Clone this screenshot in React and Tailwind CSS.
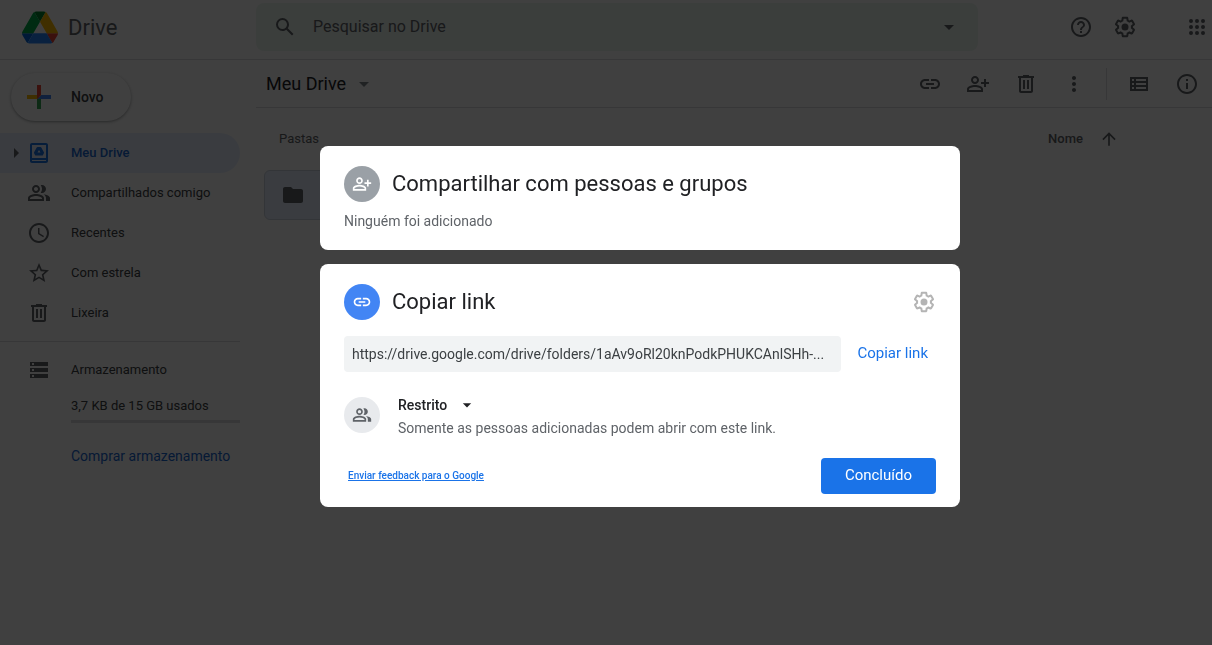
const PATHS = {
  search:
    "M20.49 19l-5.73-5.73C15.53 12.2 16 10.91 16 9.5A6.5 6.5 0 1 0 9.5 16c1.41 0 2.7-.47 3.77-1.24L19 20.49 20.49 19zM5 9.5C5 7.01 7.01 5 9.5 5S14 7.01 14 9.5 11.99 14 9.5 14 5 11.99 5 9.5z",
  caret: "M7 10l5 5 5-5z",
  caretRight: "M10 17l5-5-5-5z",
  help: "M11 18h2v-2h-2v2zm1-16C6.48 2 2 6.48 2 12s4.48 10 10 10 10-4.48 10-10S17.52 2 12 2zm0 18c-4.41 0-8-3.59-8-8s3.59-8 8-8 8 3.59 8 8-3.59 8-8 8zm0-14c-2.21 0-4 1.79-4 4h2c0-1.1.9-2 2-2s2 .9 2 2c0 2-3 1.75-3 5h2c0-2.25 3-2.5 3-5 0-2.21-1.79-4-4-4z",
  gear: "M13.85 22.25h-3.7c-.74 0-1.36-.54-1.45-1.27l-.27-1.89c-.27-.14-.53-.29-.79-.46l-1.8.72c-.7.26-1.47-.03-1.81-.65L2.2 15.53c-.35-.66-.2-1.44.36-1.88l1.53-1.19c-.01-.15-.02-.3-.02-.46 0-.15.01-.31.02-.46l-1.52-1.19c-.59-.45-.74-1.26-.37-1.88l1.85-3.19c.34-.62 1.11-.9 1.79-.63l1.81.73c.26-.17.52-.32.78-.46l.27-1.91c.09-.7.71-1.25 1.44-1.25h3.7c.74 0 1.36.54 1.45 1.27l.27 1.89c.27.14.53.29.79.46l1.8-.72c.71-.26 1.48.03 1.82.65l1.84 3.18c.36.66.2 1.44-.36 1.88l-1.52 1.19c.01.15.02.3.02.46s-.01.31-.02.46l1.52 1.19c.56.45.72 1.23.37 1.86l-1.86 3.22c-.34.62-1.11.9-1.8.63l-1.8-.72c-.26.17-.52.32-.78.46l-.27 1.91c-.1.68-.72 1.22-1.46 1.22zm-3.23-2h2.76l.37-2.55.53-.22c.44-.18.88-.44 1.34-.78l.45-.34 2.38.96 1.38-2.4-2.03-1.58.07-.56c.03-.26.06-.51.06-.78s-.03-.53-.06-.78l-.07-.56 2.03-1.58-1.39-2.4-2.39.96-.45-.35c-.42-.32-.87-.58-1.33-.77l-.52-.22-.37-2.55h-2.76l-.37 2.55-.53.21c-.44.19-.88.44-1.34.79l-.45.33-2.38-.95-1.39 2.39 2.03 1.58-.07.56a7 7 0 0 0-.06.79c0 .26.02.53.06.78l.07.56-2.03 1.58 1.38 2.4 2.39-.96.45.35c.43.33.86.58 1.33.77l.53.22.38 2.55zM15.5 12a3.5 3.5 0 1 1-7 0 3.5 3.5 0 0 1 7 0z",
  apps: "M6 8a2 2 0 1 0 0-4 2 2 0 0 0 0 4zm6 12a2 2 0 1 0 0-4 2 2 0 0 0 0 4zm-6 0a2 2 0 1 0 0-4 2 2 0 0 0 0 4zm0-6a2 2 0 1 0 0-4 2 2 0 0 0 0 4zm6 0a2 2 0 1 0 0-4 2 2 0 0 0 0 4zm4-8a2 2 0 1 0 4 0 2 2 0 0 0-4 0zm-4 2a2 2 0 1 0 0-4 2 2 0 0 0 0 4zm6 6a2 2 0 1 0 0-4 2 2 0 0 0 0 4zm0 6a2 2 0 1 0 0-4 2 2 0 0 0 0 4z",
  link: "M17 7h-4v2h4c1.65 0 3 1.35 3 3s-1.35 3-3 3h-4v2h4c2.76 0 5-2.24 5-5s-2.24-5-5-5zm-6 8H7c-1.65 0-3-1.35-3-3s1.35-3 3-3h4V7H7c-2.76 0-5 2.24-5 5s2.24 5 5 5h4v-2zm-3-4h8v2H8z",
  personAdd:
    "M9 12c2.21 0 4-1.79 4-4s-1.79-4-4-4-4 1.79-4 4 1.79 4 4 4zm0-6c1.1 0 2 .9 2 2s-.9 2-2 2-2-.9-2-2 .9-2 2-2zm0 7c-2.67 0-8 1.34-8 4v3h16v-3c0-2.66-5.33-4-8-4zm6 5H3v-1c0-.64 3.13-2 6-2s6 1.37 6 2v1zm5-8V7h-2v3h-3v2h3v3h2v-3h3v-2h-3z",
  trash:
    "M15 4V3H9v1H4v2h1v13c0 1.1.9 2 2 2h10c1.1 0 2-.9 2-2V6h1V4h-5zm2 15H7V6h10v13zM9 8h2v9H9zm4 0h2v9h-2z",
  more: "M12 8c1.1 0 2-.9 2-2s-.9-2-2-2-2 .9-2 2 .9 2 2 2zm0 2c-1.1 0-2 .9-2 2s.9 2 2 2 2-.9 2-2-.9-2-2-2zm0 6c-1.1 0-2 .9-2 2s.9 2 2 2 2-.9 2-2-.9-2-2-2z",
  list: "M3 5v14h18V5H3zm4 2v2H5V7h2zm-2 6v-2h2v2H5zm0 2h2v2H5v-2zm14 2H9v-2h10v2zm0-4H9v-2h10v2zm0-4H9V7h10v2z",
  info: "M11 7h2v2h-2zm0 4h2v6h-2zm1-9C6.48 2 2 6.48 2 12s4.48 10 10 10 10-4.48 10-10S17.52 2 12 2zm0 18c-4.41 0-8-3.59-8-8s3.59-8 8-8 8 3.59 8 8-3.59 8-8 8z",
  drive:
    "M19 2H5C3.9 2 3 2.9 3 4v16c0 1.1.9 2 2 2h14c1.1 0 2-.9 2-2V4c0-1.1-.9-2-2-2zm0 18H5v-1h14v1zm0-3H5V4h14v13zM10.6 6Q10 6 9.700 6.500L7.100 11.200Q6.800 11.800 7.100 12.300L8 14Q8.300 14.500 8.900 14.500H15.100Q15.700 14.500 16 14L16.900 12.300Q17.200 11.800 16.900 11.200L14.300 6.500Q14 6 13.400 6ZM12 9l1.500 2.600h-3z",
  group:
    "M15 8c0-1.42-.5-2.73-1.33-3.76.42-.14.86-.24 1.33-.24 2.21 0 4 1.79 4 4s-1.79 4-4 4c-.43 0-.84-.09-1.23-.21-.03-.01-.06-.02-.1-.03A5.98 5.98 0 0 0 15 8zm1.66 5.13C18.03 14.06 19 15.32 19 17v3h4v-3c0-2.18-3.58-3.47-6.34-3.87zM9 6c-1.1 0-2 .9-2 2s.9 2 2 2 2-.9 2-2-.9-2-2-2m0-2c2.21 0 4 1.79 4 4s-1.79 4-4 4-4-1.79-4-4 1.79-4 4-4zm0 11c-2.7 0-5.8 1.29-6 2.01V18h12v-1c-.2-.71-3.3-2-6-2m0-2c2.67 0 8 1.34 8 4v3H1v-3c0-2.66 5.33-4 8-4z",
  clock:
    "M11.99 2C6.47 2 2 6.48 2 12s4.47 10 9.99 10C17.52 22 22 17.52 22 12S17.52 2 11.99 2zM12 20c-4.42 0-8-3.58-8-8s3.58-8 8-8 8 3.58 8 8-3.58 8-8 8zm.5-13H11v6l5.25 3.15.75-1.23-4.5-2.67z",
  star: "M22 9.24l-7.19-.62L12 2 9.19 8.63 2 9.24l5.46 4.73L5.82 21 12 17.27 18.18 21l-1.63-7.03L22 9.24zM12 15.4l-3.76 2.27 1-4.28-3.32-2.88 4.38-.38L12 6.1l1.71 4.04 4.38.38-3.32 2.88 1 4.28L12 15.4z",
  storage:
    "M3 20h18v-4H3v4zm2-3h2v2H5v-2zM3 4v4h18V4H3zm4 3H5V5h2v2zm-4 7h18v-4H3v4zm2-3h2v2H5v-2z",
  folder:
    "M10 4H4c-1.1 0-1.99.9-1.99 2L2 18c0 1.1.9 2 2 2h16c1.1 0 2-.9 2-2V8c0-1.1-.9-2-2-2h-8l-2-2z",
  up: "M4 12l1.41 1.41L11 7.83V20h2V7.83l5.58 5.59L20 12l-8-8-8 8z",
};

function Icon({ name, className = "size-6" }) {
  return (
    <svg viewBox="0 0 24 24" fill="currentColor" fillRule="evenodd" aria-hidden="true" className={`shrink-0 ${className}`}>
      <path d={PATHS[name]} />
    </svg>
  );
}

function IconButton({ name, label, className = "" }) {
  return (
    <button type="button" aria-label={label} className={`shrink-0 text-[#5f6368] ${className}`}>
      <Icon name={name} />
    </button>
  );
}

function DriveLogo() {
  return (
    <svg viewBox="0 0 87.3 78" aria-hidden="true" className="h-[33px] w-9 shrink-0">
      <path fill="#0066da" d="m6.6 66.85 3.85 6.65c.8 1.4 1.95 2.5 3.3 3.3l13.75-23.8h-27.5c0 1.55.4 3.1 1.2 4.5z" />
      <path fill="#00ac47" d="m43.65 25-13.75-23.8c-1.35.8-2.5 1.9-3.3 3.3l-25.4 44a9.06 9.06 0 0 0 -1.2 4.5h27.5z" />
      <path fill="#ea4335" d="m73.55 76.8c1.35-.8 2.5-1.9 3.3-3.3l1.6-2.75 7.65-13.25c.8-1.4 1.2-2.95 1.2-4.5h-27.502l5.852 11.5z" />
      <path fill="#00832d" d="m43.65 25 13.75-23.8c-1.35-.8-2.9-1.2-4.5-1.2h-18.5c-1.6 0-3.15.45-4.5 1.2z" />
      <path fill="#2684fc" d="m59.8 53h-32.3l-13.75 23.8c1.35.8 2.9 1.2 4.5 1.2h50.8c1.6 0 3.15-.45 4.5-1.2z" />
      <path fill="#ffba00" d="m73.4 26.5-12.7-22c-.8-1.4-1.95-2.5-3.3-3.3l-13.75 23.8 16.15 28h27.45c0-1.55-.4-3.1-1.2-4.5z" />
    </svg>
  );
}

function PlusLogo() {
  return (
    <svg viewBox="0 0 36 36" aria-hidden="true" className="size-9 shrink-0">
      <path fill="#34a853" d="M16 16v14h4V20z" />
      <path fill="#4285f4" d="M30 16H20l-4 4h14z" />
      <path fill="#fbbc05" d="M6 16v4h10l4-4z" />
      <path fill="#ea4335" d="M20 16V6h-4v14z" />
    </svg>
  );
}

const NAV = [
  { icon: "group", label: "Compartilhados comigo" },
  { icon: "clock", label: "Recentes" },
  { icon: "star", label: "Com estrela" },
  { icon: "trash", label: "Lixeira" },
];

function Header() {
  return (
    <header className="flex h-[60px] items-start border-b border-[#dadce0]">
      <a href="#" className="flex h-[54px] w-64 shrink-0 items-center gap-2.5 pl-[22px] text-[22px] text-[#5f6368]">
        <DriveLogo />
        Drive
      </a>
      <div className="mt-[3px] flex h-12 max-w-[722px] flex-1 items-center rounded-lg bg-[#ecf5f0] px-[17px] text-[#5f6368]">
        <Icon name="search" />
        <input
          type="search"
          aria-label="Pesquisar no Drive"
          placeholder="Pesquisar no Drive"
          className="ml-4 min-w-0 flex-1 bg-transparent text-base outline-none placeholder:text-[#5f6368]"
        />
        <IconButton name="caret" label="Opções de pesquisa" />
      </div>
      <div className="ml-auto flex h-[54px] items-center gap-5 pr-[3px]">
        <IconButton name="help" label="Suporte" />
        <IconButton name="gear" label="Configurações" />
        <IconButton name="apps" label="Google Apps" className="ml-7" />
      </div>
    </header>
  );
}

function Sidebar() {
  return (
    <aside className="w-64 shrink-0 pr-4 text-[13px] text-[#3c4043]">
      <button
        type="button"
        className="mt-[13px] ml-[11px] flex h-12 w-[120px] items-center gap-3.5 rounded-full bg-white pl-2.5 text-sm font-medium shadow-[0_1px_2px_0_rgba(60,64,67,0.3),0_1px_3px_1px_rgba(60,64,67,0.15)]"
      >
        <PlusLogo />
        Novo
      </button>
      <nav className="mt-3">
        <a href="#" className="flex h-10 items-center rounded-r-full bg-[#e8f0fe] pl-1 font-medium text-[#1967d2]">
          <Icon name="caretRight" className="size-6 text-[#5f6368]" />
          <Icon name="drive" className="-ml-px size-6 text-[#1a73e8]" />
          <span className="ml-5">Meu Drive</span>
        </a>
        {NAV.map((item) => (
          <a key={item.label} href="#" className="flex h-10 items-center gap-5 pl-[27px]">
            <Icon name={item.icon} className="size-6 text-[#5f6368]" />
            {item.label}
          </a>
        ))}
      </nav>
      <div className="mt-2 border-t border-[#dadce0] pt-4">
        <a href="#" className="flex h-6 items-center gap-5 pl-[27px]">
          <Icon name="storage" className="size-6 text-[#5f6368]" />
          Armazenamento
        </a>
        <div className="pt-3.5 pl-[71px]">
          <p className="leading-5">3,7 KB de 15 GB usados</p>
          <div className="mt-1 h-[3px] bg-[#dadce0]" />
          <a href="#" className="mt-[25px] block text-sm leading-4 whitespace-nowrap text-[#1967d2]">
            Comprar armazenamento
          </a>
        </div>
      </div>
    </aside>
  );
}

function Main() {
  return (
    <main className="min-w-0 flex-1">
      <div className="flex h-12 items-center border-b border-[#dadce0] pr-[13px] pl-2.5">
        <button type="button" className="flex items-center gap-1.5 text-lg text-[#202124]">
          Meu Drive
          <Icon name="caret" className="size-6 text-[#80868b]" />
        </button>
        <div className="ml-auto flex items-center gap-6">
          <IconButton name="link" label="Gerar link" />
          <IconButton name="personAdd" label="Compartilhar" />
          <IconButton name="trash" label="Remover" />
          <IconButton name="more" label="Mais ações" />
          <div className="-mx-1 h-8 w-px bg-[#dadce0]" />
          <IconButton name="list" label="Exibição em lista" />
          <IconButton name="info" label="Ver detalhes" />
        </div>
      </div>
      <div className="flex items-center pt-[21px] pr-[93px] pl-[23px] text-[13px] text-[#5f6368]">
        <h2>Pastas</h2>
        <button type="button" className="ml-auto flex items-center gap-4 font-medium">
          Nome
          <Icon name="up" className="size-5" />
        </button>
      </div>
      <button
        type="button"
        aria-label="Pasta"
        className="mt-[21px] ml-2 flex h-[50px] w-56 items-center rounded-md border border-[#ccd3e0] bg-[#e8f0fe] pl-4 text-[#5f6368]"
      >
        <Icon name="folder" />
      </button>
    </main>
  );
}

function ShareDialog() {
  return (
    <div role="dialog" aria-modal="true" aria-label="Compartilhar" className="flex w-[640px] flex-col gap-3.5 text-sm">
      <section className="rounded-lg bg-white px-6 pt-5 pb-[18px]">
        <div className="flex items-center gap-3">
          <span className="flex size-9 items-center justify-center rounded-full bg-[#9aa0a6] text-white">
            <Icon name="personAdd" className="size-5" />
          </span>
          <h1 className="text-[22px] text-[#202124]">Compartilhar com pessoas e grupos</h1>
        </div>
        <p className="mt-2 leading-[22px] text-[#5f6368]">Ninguém foi adicionado</p>
      </section>
      <section className="rounded-lg bg-white px-6 pt-5 pb-[13px]">
        <div className="flex items-center gap-3">
          <span className="flex size-9 items-center justify-center rounded-full bg-[#4285f4] text-white">
            <Icon name="link" className="size-5" />
          </span>
          <h2 className="text-[22px] text-[#202124]">Copiar link</h2>
          <button type="button" aria-label="Configurações do link" className="ml-auto text-[#b4b4b4]">
            <Icon name="gear" />
          </button>
        </div>
        <div className="mt-4 flex items-center gap-4">
          <input
            readOnly
            aria-label="Link"
            value="https://drive.google.com/drive/folders/1aAv9oRl20knPodkPHUKCAnlSHh-..."
            className="h-9 min-w-0 flex-1 rounded bg-[#f1f3f4] px-2 text-[#3c4043] outline-none"
          />
          <button type="button" className="pr-2 text-[15px] text-[#1a73e8]">
            Copiar link
          </button>
        </div>
        <div className="mt-[21px] flex items-start gap-[18px]">
          <span className="mt-1 flex size-9 items-center justify-center rounded-full bg-[#e8eaed] text-[#5f6368]">
            <Icon name="group" className="size-5" />
          </span>
          <div>
            <button type="button" className="flex items-center gap-2.5 leading-6 font-medium text-[#202124]">
              Restrito
              <Icon name="caret" className="size-5" />
            </button>
            <p className="leading-[22px] text-[#5f6368]">Somente as pessoas adicionadas podem abrir com este link.</p>
          </div>
        </div>
        <div className="mt-[19px] flex items-center justify-between pl-1">
          <a href="#" className="text-[10px] font-medium text-[#1a73e8] underline">
            Enviar feedback para o Google
          </a>
          <button type="button" className="h-9 rounded bg-[#1a73e8] px-6 text-[15px] text-white">
            Concluído
          </button>
        </div>
      </section>
    </div>
  );
}

export default function App() {
  return (
    <div className="min-h-screen bg-white font-[Roboto,sans-serif]">
      <Header />
      <div className="flex">
        <Sidebar />
        <Main />
      </div>
      <div className="fixed inset-0 flex items-start justify-center bg-black/75 pt-[146px] pl-[68px]">
        <ShareDialog />
      </div>
    </div>
  );
}
